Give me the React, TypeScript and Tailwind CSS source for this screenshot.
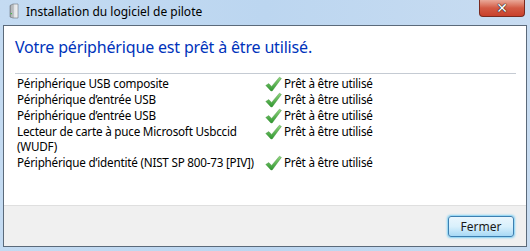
import React from "react";

const font = { fontFamily: '"Noto Sans", "Open Sans", sans-serif' };

function Check() {
  return (
    <svg width="17" height="16" viewBox="0 0 17 16" className="shrink-0">
      <defs>
        <linearGradient id="cg" x1="0" y1="0" x2="0" y2="1">
          <stop offset="0" stopColor="#8fd57c" />
          <stop offset="1" stopColor="#2f9630" />
        </linearGradient>
      </defs>
      <path d="M0.8 9.4 L3.8 7.6 L6.6 10.4 L14.4 1.2 L16.4 2.4 L7.2 15 L5.9 15 Z" fill="url(#cg)" stroke="#3a8a34" strokeWidth="0.4" />
    </svg>
  );
}

function TowerIcon() {
  return (
    <svg width="16" height="16" viewBox="0 0 16 16">
      <defs>
        <linearGradient id="tg" x1="0" y1="0" x2="1" y2="0">
          <stop offset="0" stopColor="#8c8f93" />
          <stop offset="0.35" stopColor="#d9dcdf" />
          <stop offset="1" stopColor="#f4f5f6" />
        </linearGradient>
      </defs>
      <path d="M4 2.5 L7 1 L12 1 L12 15 L7 15 L4 14 Z" fill="url(#tg)" stroke="#6d7278" strokeWidth="0.6" />
      <path d="M7 1 L7 15" stroke="#7a7f85" strokeWidth="0.6" />
      <rect x="4.7" y="10" width="1.2" height="1.2" fill="#3fbf3f" />
    </svg>
  );
}

const rows: string[][] = [
  ["Périphérique USB composite"],
  ["Périphérique d’entrée USB"],
  ["Périphérique d’entrée USB"],
  ["Lecteur de carte à puce Microsoft Usbccid", "(WUDF)"],
  ["Périphérique d’identité (NIST SP 800-73 [PIV])"],
];

export default function App() {
  return (
    <div
      className="w-[530px] h-[251px] flex flex-col px-[3px] pb-[4px] bg-gradient-to-r from-[#c4dbf2] via-[#bcd6f0] to-[#c8dcf1]"
      style={font}
    >
      <div className="h-[25px] flex items-start shrink-0">
        <div className="mt-[3px] ml-[3px]">
          <TowerIcon />
        </div>
        <div className="ml-[4px] mt-[3px] text-[12px] leading-[18px] text-black">
          Installation du logiciel de pilote
        </div>
        <div className="ml-auto mr-[2px] w-[46px] h-[17px] rounded-b-[4px] border border-t-0 border-[#7a2a1f] bg-gradient-to-b from-[#e9a899] via-[#d25a44] to-[#c9402b] flex items-center justify-center">
          <span className="text-white text-[14px] font-bold leading-none [text-shadow:0_0_1px_#222,0_0_1px_#222,0_0_1px_#222]" style={{ fontFamily: '"DejaVu Sans", sans-serif' }}>
            ✕
          </span>
        </div>
      </div>
      <div className="flex-1 flex flex-col border border-[#5b6a7a]">
        <div className="flex-1 bg-white flex flex-col pl-[11px] pr-[10px]">
          <div className="pt-[7px] text-[16px] leading-[28px] tracking-[-0.17px] text-[#0033bb] whitespace-nowrap">
            Votre périphérique est prêt à être utilisé.
          </div>
          <div className="mt-[12px] h-px bg-[#c5cbd3]" />
          <div className="mt-[2px] flex flex-col text-[11.7px] leading-[15.4px] tracking-[-0.22px] text-black pl-[2px]">
            {rows.map((r, i) => (
              <div key={i} className="flex">
                <div className="w-[248px] whitespace-nowrap">
                  {r.map((l, j) => (
                    <div key={j}>{l}</div>
                  ))}
                </div>
                <div className="flex items-start gap-[2px] whitespace-nowrap">
                  <Check />
                  <span>Prêt à être utilisé</span>
                </div>
              </div>
            ))}
          </div>
        </div>
        <div className="h-[41px] shrink-0 bg-[#f0f0f0] border-t border-[#dfdfdf] flex items-center justify-end pr-[12px]">
          <button className="w-[66px] h-[21px] rounded-[3px] border border-[#3c7fb1] bg-gradient-to-b from-[#eaf6fd] via-[#d9f0fc] to-[#a7d9f5] shadow-[0_0_2px_1px_#7fd0f5] text-[12px] leading-none text-[#1a1a1a] mt-[1px]">
            Fermer
          </button>
        </div>
      </div>
    </div>
  );
}
